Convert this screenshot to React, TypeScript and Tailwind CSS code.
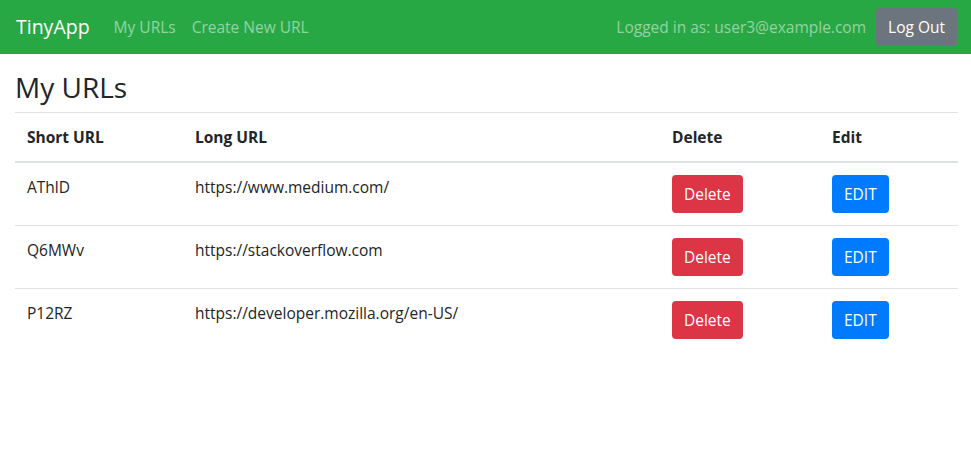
import React from 'react';

const urls = [
  { id: 'AThlD', long: 'https://www.medium.com/' },
  { id: 'Q6MWv', long: 'https://stackoverflow.com' },
  { id: 'P12RZ', long: 'https://developer.mozilla.org/en-US/' },
];

export default function App() {
  return (
    <div className="min-h-[464px] bg-white text-[#212529] text-[15.5px] leading-6" style={{ fontFamily: '"Open Sans", "Noto Sans", sans-serif' }}>
      <nav className="flex h-[54px] items-center justify-between bg-[#28a745] pl-4 pr-[14px]">
        <div className="flex items-center">
          <a className="mr-4 text-[19.5px] leading-[30px] text-white">TinyApp</a>
          <a className="px-2 text-white/50">My URLs</a>
          <a className="px-2 text-white/50">Create New URL</a>
        </div>
        <div className="flex items-center">
          <span className="mr-[10px] text-white/50">Logged in as: user3@example.com</span>
          <button className="flex h-[38px] items-center rounded bg-[#6c757d] px-3 text-white">Log Out</button>
        </div>
      </nav>
      <main className="pl-[15px] pr-[13px]">
        <h3 className="mt-4 mb-2 text-[28px] font-medium leading-[34px]">My URLs</h3>
        <table className="w-full border-collapse">
          <thead>
            <tr className="border-t border-[#dee2e6]">
              <th className="w-[168px] border-b-2 border-[#dee2e6] px-3 py-3 text-left font-bold">Short URL</th>
              <th className="w-[477px] border-b-2 border-[#dee2e6] px-3 py-3 text-left font-bold">Long URL</th>
              <th className="w-[160px] border-b-2 border-[#dee2e6] px-3 py-3 text-left font-bold">Delete</th>
              <th className="border-b-2 border-[#dee2e6] px-3 py-3 text-left font-bold">Edit</th>
            </tr>
          </thead>
          <tbody>
            {urls.map((u, i) => (
              <tr key={u.id} className={i > 0 ? 'border-t border-[#dee2e6]' : ''}>
                <td className="px-3 py-3 align-top">{u.id}</td>
                <td className="px-3 py-3 align-top">{u.long}</td>
                <td className="px-3 py-3 align-top">
                  <button className="flex h-[38px] items-center rounded bg-[#dc3545] px-3 text-white">Delete</button>
                </td>
                <td className="px-3 py-3 align-top">
                  <button className="flex h-[38px] items-center rounded bg-[#007bff] px-3 text-white">EDIT</button>
                </td>
              </tr>
            ))}
          </tbody>
        </table>
      </main>
    </div>
  );
}
